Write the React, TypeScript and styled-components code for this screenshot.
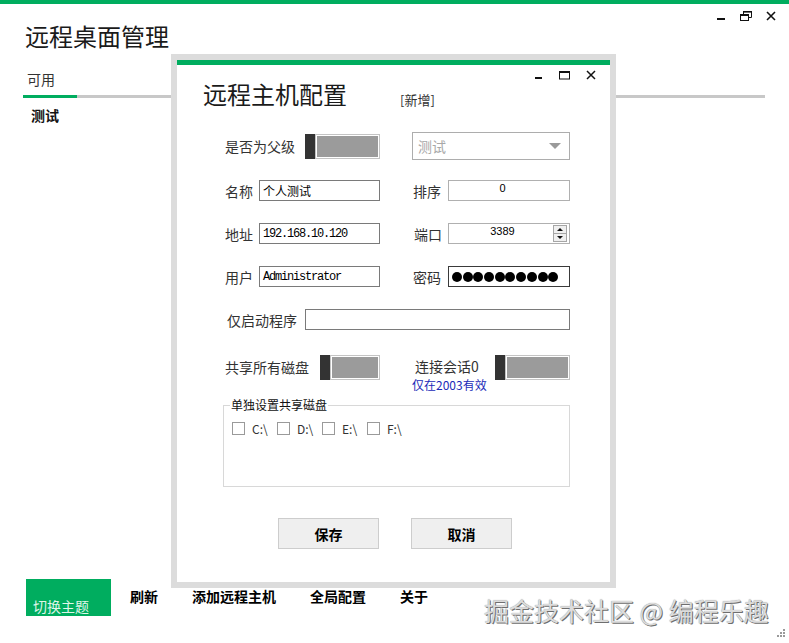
import React from 'react';
import styled, { createGlobalStyle } from 'styled-components';

const GREEN = '#00ad5f';
const CJK = `"Noto Sans CJK SC", "Microsoft YaHei", sans-serif`;

const GlobalStyle = createGlobalStyle`
  html, body { margin: 0; padding: 0; background: #fff; }
  body { font-family: ${CJK}; color: #222; }
  * { box-sizing: border-box; }
`;

const Page = styled.div`
  position: relative;
  width: 789px;
  height: 643px;
  overflow: hidden;
  background: #fff;
  display: flex;
  flex-direction: column;
`;

const TopBar = styled.div`
  flex: none;
  height: 4px;
  background: ${GREEN};
`;

const Header = styled.div`
  flex: none;
  display: flex;
  justify-content: space-between;
  align-items: flex-start;
  height: 48px;
  padding: 0 13px 0 25px;
`;

const AppTitle = styled.h1`
  margin: 18px 0 0;
  font-size: 24px;
  line-height: 28px;
  font-weight: 400;
  color: #1a1a1a;
`;

const WinControls = styled.div<{ $gap: number; $mt: number }>`
  display: flex;
  align-items: flex-start;
  gap: ${(p) => p.$gap}px;
  margin-top: ${(p) => p.$mt}px;
  svg { display: block; }
`;

const TabStrip = styled.div`
  flex: none;
  display: flex;
  margin: 17px 24px 0 23px;
  border-bottom: 3px solid #c8c8c8;
`;

const Tab = styled.div<{ $active?: boolean }>`
  width: 54px;
  padding: 0 0 6px 4px;
  margin-bottom: -3px;
  font-size: 14px;
  line-height: 20px;
  color: #333;
  border-bottom: 3px solid ${(p) => (p.$active ? GREEN : 'transparent')};
`;

const ListItem = styled.div`
  flex: none;
  margin-top: 7px;
  padding-left: 31px;
  font-size: 14px;
  line-height: 20px;
  font-weight: 700;
  color: #111;
`;

const Spacer = styled.div`
  flex: 1;
`;

const Footer = styled.div`
  flex: none;
  display: flex;
  height: 37px;
  margin-bottom: 27px;
  padding-left: 26px;
`;

const ThemeButton = styled.div`
  width: 85px;
  background: ${GREEN};
  color: #dff5e8;
  font-size: 14px;
  line-height: 20px;
  display: flex;
  align-items: flex-end;
  padding-left: 7px;
`;

const ToolItems = styled.div`
  display: flex;
  gap: 34px;
  margin-left: 19px;
`;

const ToolItem = styled.div`
  font-size: 14px;
  line-height: 35px;
  font-weight: 700;
  color: #000;
`;

/* ---------- dialog ---------- */

const Dialog = styled.div`
  position: absolute;
  left: 171px;
  top: 54px;
  width: 445px;
  height: 534px;
  border: 6px solid #dcdcdc;
  background: #fff;
  display: flex;
  flex-direction: column;
`;

const DialogAccent = styled.div`
  height: 5px;
  background: ${GREEN};
`;

const DialogControlsRow = styled.div`
  height: 20px;
  display: flex;
  justify-content: flex-end;
  align-items: center;
  padding-right: 14px;
`;

const DialogTitleRow = styled.div`
  display: flex;
  align-items: flex-start;
  margin-top: -5px;
  height: 28px;
  padding-left: 26px;
`;

const DialogTitle = styled.div`
  width: 197px;
  font-size: 24px;
  line-height: 28px;
  color: #1a1a1a;
`;

const ModeTag = styled.div`
  margin-top: 11px;
  font-size: 13px;
  line-height: 18px;
  color: #333;
`;

const Form = styled.div`
  display: flex;
  flex-direction: column;
  padding: 0 40px 0 48px;
`;

const FormRow = styled.div<{ $mt: number; $h: number }>`
  display: flex;
  gap: 32px;
  margin-top: ${(p) => p.$mt}px;
  height: ${(p) => p.$h}px;
`;

const Col = styled.div<{ $w: number; $top?: boolean }>`
  width: ${(p) => p.$w}px;
  display: flex;
  justify-content: space-between;
  align-items: ${(p) => (p.$top ? 'flex-start' : 'center')};
`;

const Label = styled.div<{ $pl?: number; $lh?: number }>`
  font-size: 14px;
  line-height: ${(p) => p.$lh ?? 20}px;
  color: #333;
  white-space: nowrap;
  padding-left: ${(p) => p.$pl ?? 0}px;
`;

const LabelStack = styled.div`
  display: flex;
  flex-direction: column;
  padding-top: 2px;
`;

const Note = styled.div`
  margin-top: 4px;
  font-size: 12px;
  line-height: 12px;
  color: #1b2ab8;
  white-space: nowrap;
`;

const Toggle = styled.div<{ $w: number }>`
  width: ${(p) => p.$w}px;
  height: 25px;
  display: flex;
`;

const Knob = styled.div`
  width: 10px;
  background: #333;
`;

const Track = styled.div`
  flex: 1;
  border: 1px solid #c4c4c4;
  padding: 1px;
  background: #fff;
  &::after {
    content: '';
    display: block;
    height: 100%;
    background: #9b9b9b;
  }
`;

const Select = styled.div`
  width: 158px;
  height: 28px;
  border: 1px solid #adadad;
  display: flex;
  align-items: center;
  justify-content: space-between;
  padding: 0 8px 0 5px;
  font-size: 14px;
  line-height: 20px;
  color: #a8a8a8;
`;

const Caret = styled.span`
  width: 0;
  height: 0;
  border-left: 6px solid transparent;
  border-right: 6px solid transparent;
  border-top: 6px solid #9a9a9a;
`;

const Field = styled.div<{ $w: number; $tone?: 'dark' | 'mid' | 'light' }>`
  width: ${(p) => p.$w}px;
  height: 21px;
  border: 1px solid
    ${(p) => (p.$tone === 'dark' ? '#3a3a3a' : p.$tone === 'light' ? '#b0b0b0' : '#7a7a7a')};
  display: flex;
  align-items: center;
  padding-left: 3px;
  background: #fff;
`;

const CjkValue = styled.span`
  font-size: 12px;
  line-height: 16px;
  color: #000;
`;

const MonoValue = styled.span`
  font-family: "Liberation Mono", "DejaVu Sans Mono", monospace;
  font-size: 12px;
  line-height: 16px;
  letter-spacing: -1.2px;
  color: #000;
`;

const NumValue = styled.span`
  flex: 1;
  align-self: flex-start;
  padding-top: 1px;
  text-align: center;
  font-family: "Liberation Sans", Arial, sans-serif;
  font-size: 11px;
  line-height: 13px;
  color: #000;
`;

const Spin = styled.div`
  width: 14px;
  height: 17px;
  margin-right: 2px;
  border: 1px solid #a6a6a6;
  background: #f0f0f0;
  display: flex;
  flex-direction: column;
`;

const SpinHalf = styled.div<{ $down?: boolean }>`
  flex: 1;
  display: flex;
  align-items: center;
  justify-content: center;
  border-top: ${(p) => (p.$down ? '1px solid #a6a6a6' : 'none')};
  &::after {
    content: '';
    width: 0;
    height: 0;
    border-left: 3px solid transparent;
    border-right: 3px solid transparent;
    ${(p) => (p.$down ? 'border-top: 3px solid #111;' : 'border-bottom: 3px solid #111;')}
  }
`;

const SpinGap = styled.div`
  width: 16px;
`;

const Dots = styled.div`
  display: flex;
  gap: 0.7px;
`;

const Dot = styled.span`
  width: 10px;
  height: 10px;
  border-radius: 50%;
  background: #000;
`;

const DiskGroup = styled.fieldset`
  margin: 8px 0 0 -2px;
  width: 347px;
  height: 89px;
  padding: 0 6px;
  border: 1px solid #d8d8d8;
`;

const DiskLegend = styled.legend`
  padding: 0 1px;
  font-size: 12px;
  line-height: 14px;
  color: #111;
`;

const DiskList = styled.div`
  display: flex;
  margin: 10px 0 0 2px;
`;

const DiskItem = styled.label`
  width: 45px;
  display: flex;
  align-items: center;
  font-size: 12px;
  line-height: 13px;
  color: #333;
`;

const CheckBox = styled.span`
  width: 13px;
  height: 13px;
  border: 1px solid #9a9a9a;
  background: #fff;
  margin-right: 7px;
  flex: none;
`;

const ButtonRow = styled.div`
  display: flex;
  justify-content: center;
  gap: 32px;
  margin-top: 31px;
  padding-right: 5px;
`;

const Button = styled.button`
  width: 101px;
  height: 31px;
  border: 1px solid #cdcdcd;
  background: #efefef;
  font-family: ${CJK};
  font-size: 14px;
  font-weight: 700;
  color: #000;
  padding: 0;
`;

const Watermark = styled.div`
  position: absolute;
  left: 484px;
  top: 595px;
  font-size: 25px;
  line-height: 30px;
  color: #dcdcdc;
  white-space: nowrap;
  text-shadow: 1px 1px 0 #6e6e6e, 0 0 1px #888;
`;

const Grip = styled.svg`
  position: absolute;
  right: 3px;
  bottom: 5px;
`;

const MainMin = () => (
  <svg width="9" height="10" viewBox="0 0 9 10">
    <rect x="0" y="7" width="8" height="2" fill="#111" />
  </svg>
);
const MainRestore = () => (
  <svg width="12" height="10" viewBox="0 0 12 10">
    <path d="M3.5 3V0.5H11.5V6.5H9" fill="none" stroke="#111" strokeWidth="1" />
    <rect x="0.5" y="3.5" width="8" height="6" fill="none" stroke="#111" strokeWidth="1" />
    <rect x="0" y="3" width="9" height="2" fill="#111" />
    <rect x="3" y="0" width="9" height="1.6" fill="#111" />
  </svg>
);
const MainClose = () => (
  <svg width="10" height="10" viewBox="0 0 10 10">
    <path d="M1 1L9 9M9 1L1 9" stroke="#111" strokeWidth="1.6" />
  </svg>
);
const DlgMin = () => (
  <svg width="8" height="10" viewBox="0 0 8 10">
    <rect x="0" y="7" width="7" height="2" fill="#111" />
  </svg>
);
const DlgMax = () => (
  <svg width="11" height="10" viewBox="0 0 11 10">
    <rect x="0.5" y="1.5" width="10" height="7.5" fill="none" stroke="#111" strokeWidth="1" />
    <rect x="0" y="1" width="11" height="2" fill="#111" />
  </svg>
);
const DlgClose = () => (
  <svg width="10" height="10" viewBox="0 0 10 10">
    <path d="M1 1L9 9M9 1L1 9" stroke="#111" strokeWidth="1.5" />
  </svg>
);

const SwitchBox = ({ w }: { w: number }) => (
  <Toggle $w={w}>
    <Knob />
    <Track />
  </Toggle>
);

const disks = ['C:\\', 'D:\\', 'E:\\', 'F:\\'];

export default function App() {
  return (
    <>
      <GlobalStyle />
      <Page>
        <TopBar />
        <Header>
          <AppTitle>远程桌面管理</AppTitle>
          <WinControls $gap={14} $mt={7}>
            <MainMin />
            <MainRestore />
            <MainClose />
          </WinControls>
        </Header>
        <TabStrip>
          <Tab $active>可用</Tab>
        </TabStrip>
        <ListItem>测试</ListItem>
        <Spacer />
        <Footer>
          <ThemeButton>切换主题</ThemeButton>
          <ToolItems>
            <ToolItem>刷新</ToolItem>
            <ToolItem>添加远程主机</ToolItem>
            <ToolItem>全局配置</ToolItem>
            <ToolItem>关于</ToolItem>
          </ToolItems>
        </Footer>

        <Dialog>
          <DialogAccent />
          <DialogControlsRow>
            <WinControls $gap={16} $mt={0}>
              <DlgMin />
              <DlgMax />
              <DlgClose />
            </WinControls>
          </DialogControlsRow>
          <DialogTitleRow>
            <DialogTitle>远程主机配置</DialogTitle>
            <ModeTag>[新增]</ModeTag>
          </DialogTitleRow>
          <Form>
            <FormRow $mt={24} $h={28}>
              <Col $w={155}>
                <Label>是否为父级</Label>
                <SwitchBox w={75} />
              </Col>
              <Col $w={158}>
                <Select>
                  <span>测试</span>
                  <Caret />
                </Select>
              </Col>
            </FormRow>
            <FormRow $mt={20} $h={21}>
              <Col $w={155}>
                <Label>名称</Label>
                <Field $w={121} $tone="mid">
                  <CjkValue>个人测试</CjkValue>
                </Field>
              </Col>
              <Col $w={158}>
                <Label $pl={1}>排序</Label>
                <Field $w={122} $tone="light">
                  <NumValue>0</NumValue>
                  <SpinGap />
                </Field>
              </Col>
            </FormRow>
            <FormRow $mt={22} $h={21}>
              <Col $w={155}>
                <Label>地址</Label>
                <Field $w={121} $tone="mid">
                  <MonoValue>192.168.10.120</MonoValue>
                </Field>
              </Col>
              <Col $w={158}>
                <Label $pl={2}>端口</Label>
                <Field $w={122} $tone="light">
                  <NumValue>3389</NumValue>
                  <Spin>
                    <SpinHalf />
                    <SpinHalf $down />
                  </Spin>
                </Field>
              </Col>
            </FormRow>
            <FormRow $mt={22} $h={21}>
              <Col $w={155}>
                <Label>用户</Label>
                <Field $w={121} $tone="mid">
                  <MonoValue>Administrator</MonoValue>
                </Field>
              </Col>
              <Col $w={158}>
                <Label $pl={1}>密码</Label>
                <Field $w={122} $tone="dark">
                  <Dots>
                    {Array.from({ length: 10 }).map((_, i) => (
                      <Dot key={i} />
                    ))}
                  </Dots>
                </Field>
              </Col>
            </FormRow>
            <FormRow $mt={22} $h={21}>
              <Col $w={345}>
                <Label $pl={2}>仅启动程序</Label>
                <Field $w={265} $tone="mid" />
              </Col>
            </FormRow>
            <FormRow $mt={25} $h={35}>
              <Col $w={155} $top>
                <Label $lh={25}>共享所有磁盘</Label>
                <SwitchBox w={60} />
              </Col>
              <Col $w={158} $top>
                <LabelStack>
                  <Label $lh={18} $pl={3}>连接会话0</Label>
                  <Note>仅在2003有效</Note>
                </LabelStack>
                <SwitchBox w={75} />
              </Col>
            </FormRow>
            <DiskGroup>
              <DiskLegend>单独设置共享磁盘</DiskLegend>
              <DiskList>
                {disks.map((d) => (
                  <DiskItem key={d}>
                    <CheckBox />
                    {d}
                  </DiskItem>
                ))}
              </DiskList>
            </DiskGroup>
            <ButtonRow>
              <Button>保存</Button>
              <Button>取消</Button>
            </ButtonRow>
          </Form>
        </Dialog>

        <Watermark>掘金技术社区 @ 编程乐趣</Watermark>
        <Grip width="10" height="10" viewBox="0 0 10 10">
          <rect x="7" y="1" width="2" height="2" fill="#9a9a9a" />
          <rect x="4" y="4" width="2" height="2" fill="#9a9a9a" />
          <rect x="7" y="4" width="2" height="2" fill="#9a9a9a" />
          <rect x="1" y="7" width="2" height="2" fill="#9a9a9a" />
          <rect x="4" y="7" width="2" height="2" fill="#9a9a9a" />
          <rect x="7" y="7" width="2" height="2" fill="#9a9a9a" />
        </Grip>
      </Page>
    </>
  );
}
